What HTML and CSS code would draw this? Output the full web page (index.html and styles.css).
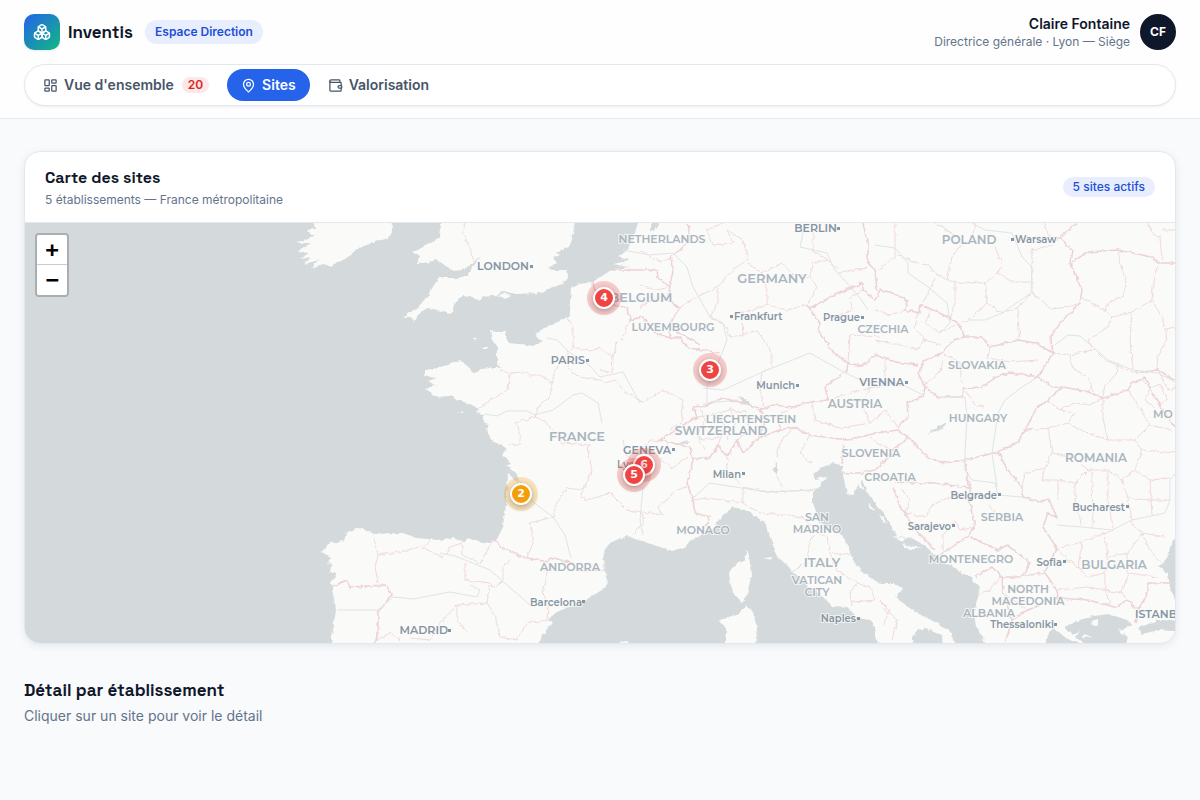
FILE: index.html
```
<!DOCTYPE html>
<html lang="fr">
<head>
    <meta charset="UTF-8">
    <meta name="viewport" content="width=device-width, initial-scale=1.0">
    <title>Inventis - Sites</title>
    <link rel="stylesheet" href="styles.css">
</head>
<body>
    <header class="header">
        <div class="topbar">
            <div class="brand">
                <div class="logo">
                    <svg class="icon" viewBox="0 0 24 24" aria-hidden="true">
                        <path d="M2.97 12.92A2 2 0 0 0 2 14.63v3.24a2 2 0 0 0 .97 1.71l3 1.8a2 2 0 0 0 2.06 0L12 19v-5.5l-5-3-4.03 2.42Z"/>
                        <path d="m7 16.5-4.74-2.85M7 16.5l5-3M7 16.5v5.17"/>
                        <path d="M12 13.5V19l3.97 2.38a2 2 0 0 0 2.06 0l3-1.8a2 2 0 0 0 .97-1.71v-3.24a2 2 0 0 0-.97-1.71L17 10.5l-5 3Z"/>
                        <path d="m17 16.5-5-3M17 16.5l4.74-2.85M17 16.5v5.17"/>
                        <path d="M7.97 4.42A2 2 0 0 0 7 6.13v4.37l5 3 5-3V6.13a2 2 0 0 0-.97-1.71l-3-1.8a2 2 0 0 0-2.06 0l-3 1.8Z"/>
                        <path d="M12 8 7.26 5.15M12 8l4.74-2.85M12 13.5V8"/>
                    </svg>
                </div>
                <span class="brand-name">Inventis</span>
                <span class="space-pill">Espace Direction</span>
            </div>
            <div class="user">
                <div class="user-info">
                    <div class="user-name">Claire Fontaine</div>
                    <div class="user-role">Directrice générale · Lyon — Siège</div>
                </div>
                <div class="avatar">CF</div>
            </div>
        </div>
        <nav class="tabs">
            <button class="tab" type="button">
                <svg class="icon" viewBox="0 0 24 24" aria-hidden="true">
                    <rect x="3" y="3" width="7" height="9" rx="1"/>
                    <rect x="14" y="3" width="7" height="5" rx="1"/>
                    <rect x="14" y="12" width="7" height="9" rx="1"/>
                    <rect x="3" y="16" width="7" height="5" rx="1"/>
                </svg>
                <span>Vue d'ensemble</span>
                <span class="count">20</span>
            </button>
            <button class="tab active" type="button">
                <svg class="icon" viewBox="0 0 24 24" aria-hidden="true">
                    <path d="M20 10c0 5-5.5 10.2-7.4 11.8a1 1 0 0 1-1.2 0C9.5 20.2 4 15 4 10a8 8 0 0 1 16 0"/>
                    <circle cx="12" cy="10" r="3"/>
                </svg>
                <span>Sites</span>
            </button>
            <button class="tab" type="button">
                <svg class="icon" viewBox="0 0 24 24" aria-hidden="true">
                    <path d="M19 7V4a1 1 0 0 0-1-1H5a2 2 0 0 0 0 4h15a1 1 0 0 1 1 1v4h-3a2 2 0 0 0 0 4h3a1 1 0 0 0 1-1v-2a1 1 0 0 0-1-1"/>
                    <path d="M3 5v14a2 2 0 0 0 2 2h15a1 1 0 0 0 1-1v-4"/>
                </svg>
                <span>Valorisation</span>
            </button>
        </nav>
    </header>

    <main class="content">
        <section class="card">
            <div class="card-header">
                <div>
                    <h2 class="card-title">Carte des sites</h2>
                    <p class="card-subtitle">5 établissements — France métropolitaine</p>
                </div>
                <span class="active-pill">5 sites actifs</span>
            </div>
            <div class="map">
                <svg class="basemap" viewBox="25 223 1150 420" role="img" aria-label="Carte de l'Europe">
                    <defs>
                        <filter id="rough" filterUnits="userSpaceOnUse" x="20" y="218" width="1165" height="430" color-interpolation-filters="sRGB">
                            <feTurbulence type="fractalNoise" baseFrequency="0.2" numOctaves="2" seed="4"/>
                            <feDisplacementMap in="SourceGraphic" scale="4" xChannelSelector="R" yChannelSelector="G"/>
                        </filter>
                    </defs>
                    <g filter="url(#rough)">
                        <g class="land">
                            <!-- Ireland -->
                            <path d="M312,215 315,229 306,230 315,236 295,243 311,243 297,252 308,253 301,259 311,257 304,264 319,260 310,268 323,264 330,266 347,258 358,248 378,241 389,238 393,230 392,215Z"/>
                            <!-- Great Britain -->
                            <path d="M442,215 440,237 423,247 413,252 420,256 417,263 428,263 435,259 443,264 453,271 462,270 467,268 474,262 481,256 475,264 466,276 457,278 438,278 436,283 431,287 429,295 417,308 403,317 411,317 415,321 419,314 427,308 438,310 448,314 452,313 455,301 463,296 472,297 479,301 483,297 498,295 503,291 517,294 540,293 550,288 562,284 568,277 567,270 553,270 547,268 557,263 553,258 560,255 556,252 569,247 574,233 575,215Z"/>
                            <path d="M498,296 505,299 511,295 504,293ZM482,347 488,346 488,349 484,349ZM459,411 464,412 462,414ZM473,338 476,338 475,340Z"/>
                            <!-- Continent -->
                            <path d="M640,215 635,233 630,245 625,252 618,257 629,260 613,264 629,267 612,270 600,277 593,282 580,284 571,288 570,303 571,315 562,320 544,328 537,333 536,338 543,341 533,346 520,344 508,343 505,338 506,332 497,332 490,331 492,340 497,347 497,363 501,368 490,368 482,369 473,373 465,363 460,360 453,363 448,365 426,370 424,376 437,378 428,381 436,386 425,388 431,393 436,397 450,396 457,400 470,404 479,409 476,413 484,415 484,422 488,425 486,430 492,440 502,446 507,449 502,454 511,464 506,465 517,475 519,484 515,481 508,472 507,497 503,527 496,541 483,543 470,538 463,542 453,538 437,540 417,538 402,533 373,534 367,530 357,528 346,534 344,541 329,543 322,552 331,557 327,563 333,565 329,573 337,573 331,583 336,610 330,650 534,650 548,628 553,623 547,620 557,612 584,601 605,588 608,583 605,572 603,552 610,543 627,535 632,538 643,541 657,546 672,551 685,547 690,541 703,534 713,528 723,515 733,507 745,510 757,517 767,525 770,537 774,548 779,558 787,565 793,572 810,587 823,597 832,606 847,607 852,612 858,618 870,620 875,627 875,637 883,650 914,650 913,637 918,630 925,628 942,635 943,650 957,650 952,633 937,623 915,612 895,597 903,588 895,584 880,584 863,573 853,560 847,543 840,532 820,523 813,503 813,490 818,488 827,477 815,479 813,473 833,463 842,466 843,475 847,494 853,495 857,487 862,480 867,492 874,502 882,511 890,523 897,536 912,538 925,546 938,558 955,568 972,579 980,588 977,600 974,613 976,627 990,650 1190,650 1190,215Z"/>
                            <!-- Mediterranean islands -->
                            <path d="M748,551 750,563 751,577 747,594 743,602 735,596 731,587 729,573 732,567 745,560 746,552ZM746,606 753,612 757,628 755,650 726,650 726,627 719,620 733,617ZM764,558 772,557 771,560ZM620,642 628,641 628,648 620,648Z"/>
                            <path d="M859,478 864,490 859,487ZM868,502 876,511 871,509ZM879,514 888,523 882,521ZM892,536 906,538 902,542ZM902,544 922,548 908,550Z"/>
                        </g>
                        <g class="water">
                            <path d="M648,215 664,215 656,228 650,233 652,224Z"/>
                            <path d="M1046,650 1048,633 1054,628 1066,638 1073,636 1065,626 1073,623 1088,617 1108,614 1128,620 1133,626 1118,630 1128,637 1122,650Z"/>
                            <path d="M1138,628 1158,620 1190,621 1190,632 1158,630 1142,634Z"/>
                            <path d="M1190,532 1173,540 1170,547 1168,557 1158,567 1168,573 1170,587 1175,600 1190,602Z"/>
                            <path d="M675,445 682,441 691,442 683,444ZM737,397 748,400 754,408 747,406ZM927,434 936,428 947,422 943,429ZM777,461 777,474 773,471Z"/>
                        </g>
                        <g class="land">
                            <path d="M1091,621 1098,619 1098,626 1092,626ZM1083,634 1091,638 1082,637Z"/>
                            <path d="M1066,638 1080,631 1075,637 1086,645 1074,642Z"/>
                        </g>
                        <g class="region">
                            <path d="M465,223 462,232 467,242 472,252 473,262M567,318 573,327 573,347 590,351 600,348 613,357 617,343 623,337 630,320M500,370 510,373 523,372 530,375 540,375 552,383 555,370 568,353 573,347M510,373 508,390 490,400 480,407M552,383 550,397 538,407 535,417 515,423 520,432 520,445 508,445M535,417 543,420 552,430 562,443 590,445M568,353 568,367 578,377 600,380 605,383 615,380 623,390 643,402 663,390 683,400 682,407 683,420 670,430M613,357 612,373 600,370"/>
                            <path d="M580,497 587,500 610,493 627,510 643,512 662,515 658,507 677,490 687,487M580,497 592,470 587,447 590,445M643,512 643,523 633,535M590,475 583,490 567,488 557,503 553,517 530,523 533,543 527,557M640,450 650,440 662,441M660,458 672,468 688,457"/>
                            <path d="M373,535 378,555 400,552 427,545 430,540M378,555 375,567 378,583M423,548 443,557 450,547 462,543 462,555 480,563 493,541M465,563 465,580 490,583 493,587 503,582 503,567 510,558M550,563 543,593 548,607 547,620M490,585 487,603 497,620 500,637 517,640 527,623 547,620M487,603 457,605 457,620 467,633M457,605 440,623 430,640 410,638M375,641 390,633 400,640"/>
                            <path d="M723,223 707,230 712,245 733,243 727,230 743,240 748,260 732,270 718,287 707,292 687,302 680,308M718,287 718,303 710,317 727,327 730,338 743,335 742,320 740,313 753,310 767,305 767,290 762,273 748,263M762,273 782,263 793,275 810,277 812,263 828,260 813,250 813,233 822,223M767,305 787,310 807,305 817,287 810,277M743,335 757,330 772,353 772,367 762,373 760,387 763,407M828,260 840,272 868,268M863,290 850,298 853,310 832,318M848,363 850,335 880,337M670,287 657,290 640,285M640,308 650,300 667,300M640,250 660,262 673,258"/>
                            <path d="M895,223 895,257 875,272M897,255 918,263 928,265 935,273 947,280 952,257 962,243 952,233 935,223M975,223 972,240M995,247 1002,263 998,273 985,283 955,282 947,280M998,273 1012,282 1030,282M985,283 987,303 972,317 962,323M955,282 955,303 950,320M987,303 1002,313 1017,308 1032,293 1045,303 1050,309 1068,307 1080,303M1017,308 1020,340M935,278 923,303M1032,293 1032,250 1052,245 1060,238M920,305 915,327 925,340 942,345M875,310 890,315 905,310M875,340 900,345 918,350 925,340M930,313 925,323 940,333 955,325"/>
                            <path d="M1045,223 1048,235 1060,238M1148,223 1152,233 1160,237 1162,260M1162,230 1175,230M1118,252 1122,270 1127,283 1122,297 1108,303 1105,310 1082,298M1158,263 1153,287 1152,300 1132,312 1112,317 1105,310M1132,312 1130,340 1133,370M1112,317 1108,327 1088,340 1092,347 1105,360 1135,373M1152,300 1163,320 1167,340 1158,357 1157,370M1166,329 1175,327M1053,353 1070,355 1092,350M1070,355 1072,367 1090,380 1093,392M1103,398 1105,385 1116,375 1118,362M990,347 988,358 1010,362 1038,360M942,353 960,362 962,385M965,390 975,405 985,407M925,385 940,372 942,360"/>
                            <path d="M1048,400 1060,410 1075,403 1090,405 1103,398M1048,428 1068,423 1075,413 1060,410M1025,430 1048,428 1052,453 1045,468 1025,473 1022,487M1068,423 1085,432 1108,440 1103,418 1103,398M1108,440 1135,440 1142,450 1175,453M1135,440 1150,425 1140,408 1128,390M1150,425 1172,430M1052,453 1075,457 1088,470 1108,470 1122,480 1135,470 1142,450M1045,468 1042,480 1058,480 1058,500M1058,480 1075,483 1075,500 1082,525M1088,470 1075,483M1092,470 1093,527M1108,470 1108,500 1113,528M1122,480 1128,498 1132,520M1135,470 1150,480 1170,478M1128,498 1150,500 1170,500M1150,480 1152,515M1140,378 1150,388 1160,384 1168,400 1158,405M1150,388 1145,400 1155,408M1160,375 1168,390 1175,388"/>
                            <path d="M1058,548 1082,542 1100,535 1113,530M1082,542 1078,567 1088,577 1105,573 1108,557 1104,533M1108,557 1128,553 1142,533 1165,537M1105,573 1105,590 1122,593 1128,573 1128,553M1128,573 1158,577M1128,520 1142,533 1150,550 1160,562M1057,590 1088,587 1105,590 1110,604M1122,593 1128,600M1057,548 1068,560 1078,567M900,487 910,500 905,513 925,517 932,505 950,497 970,500M975,527 960,530 955,522 943,535 943,553M990,505 1000,520M870,437 880,445 893,450"/>
                            <path d="M693,500 707,498 743,503 743,487 727,470 728,457M743,487 767,492 813,490M743,503 760,513 787,515 802,517 817,533 810,540 807,560 793,572M817,533 827,537 830,553 850,555M830,553 837,570 857,583 850,593 852,606M857,583 870,587 875,600 852,602M777,457 780,443 793,427M777,475 782,488M810,435 800,453 813,465M883,625 890,610 880,600M883,608 897,620 892,640"/>
                            <path d="M700,407 705,420 697,435 705,450M712,415 725,425 718,445M730,407 735,425 727,440M745,412 750,430 737,440M697,417 712,415 730,410 745,412M690,430 703,440 720,437M780,430 778,415 793,407M812,402 815,420 840,428 870,423 885,410 898,427M870,423 862,405 870,388 885,385 885,360M828,400 855,392 870,388M1000,577 990,590 978,595M1003,593 1028,610"/>
                        </g>
                        <g class="border">
                            <path d="M593,282 595,293 613,305 628,308 630,320 643,317 655,333 670,338 680,338 688,348 703,350 720,353M612,270 633,270 657,270 658,278 670,287 667,300 680,308 670,323 670,338M672,328 683,335 700,345M688,223 690,240 680,250 670,257 673,270 670,287"/>
                            <path d="M810,308 830,297 863,283 863,290 875,300 880,290 890,292 907,300 905,310 920,313 920,305 938,312 958,323 965,337 982,337 990,347 1018,340 1035,343 1053,353M863,223 868,245 868,263 875,270 877,291M807,305 820,323 818,330 833,352 848,363 847,370 825,387 828,400 810,402 793,407 773,405 760,410 740,402 723,398 707,405M848,363 862,366 875,355 895,362 918,365M965,337 953,340 942,353 925,360 918,373 925,387 938,397 962,397 963,388 982,387 995,378 1008,373 1028,375 1038,377 1053,353 1050,337 1063,320 1080,303 1082,290 1070,263 1072,250 1060,238 1077,223"/>
                            <path d="M1072,262 1088,252 1118,250 1152,257 1158,263 1175,263M1038,377 1052,387 1063,387 1088,392 1103,398 1128,390 1132,383 1145,378 1155,397 1165,413 1175,427M1135,373 1158,370 1175,380M1063,387 1048,400 1037,407 1025,430 1018,442 998,452 965,460 942,463 928,457 908,437 898,430 898,427 908,417 907,403 923,397 925,387M908,438 895,448 883,463 875,470 860,473 843,473M998,452 1008,470 1022,487 1022,497 1042,502 1048,498 1057,517 1048,513 1043,527 1057,548 1045,572"/>
                            <path d="M895,482 915,483 935,483 970,488 970,503 975,527 967,537 955,545 940,555M893,487 900,507 918,533 935,550M965,462 967,477 970,488M970,537 998,550 1008,545 1030,563 1022,577 1002,577 992,567 975,577M1022,576 1045,573 1057,590 1058,598 1028,610 1012,620 1005,643M1002,577 1003,593 1012,620M1058,598 1088,600 1115,607 1128,600 1138,610 1148,593 1148,583 1172,583M1138,610 1135,623"/>
                            <path d="M707,405 693,407 697,417 680,427 660,440 673,443 690,447 693,460 687,483 693,500 695,513 710,517 703,530M693,458 710,458 718,445 727,457 737,440 743,453 760,437 780,430 793,427 810,435 847,440 877,433 898,430M843,445 842,463M760,410 765,420 760,437M493,540 503,548 523,557 548,562 550,557 573,563 580,571 605,570M332,587 347,580 350,587 385,585 392,595 378,612 378,633 375,643"/>
                        </g>
                    </g>
                    <g class="river">
                        <path d="M485,414 497,416 507,411 527,411 535,415 553,410 573,395 582,393 598,403 602,423M547,338 557,340 570,353 587,363 600,377 623,372 640,403M623,440 626,455 638,465M643,487 640,520 643,535M517,477 533,502 553,517 565,535 571,558M440,553 455,556 490,570 530,605M337,610 378,610 393,597 413,599 450,592 477,597 480,590 470,585"/>
                        <path d="M623,250 650,255 673,253 687,267 693,287 710,317 723,323 727,340 718,363 707,387 707,403 738,400M703,388 723,390 767,370 780,365 810,353 840,370 860,380 905,386 923,395M805,223 800,247 827,253 835,270 847,283 860,298 868,310M693,498 710,483 735,487 767,492 813,490"/>
                        <path d="M972,223 985,230 1012,233 1022,257 1032,267 1031,293 1002,313 985,320 968,320M875,245 895,248 908,263 908,273 928,287 947,303 950,323 940,333M938,397 965,397 967,417 965,453 965,470 972,480 995,483 998,495 1022,497 1042,502M1038,377 1022,387 1005,400 998,413 992,453 997,487M1055,345 1068,335 1080,336 1088,343 1108,360 1133,370 1158,373 1175,382M1057,525 1082,527 1112,530 1132,520 1165,513 1170,500 1170,480 1175,474"/>
                    </g>
                    <g class="country">
                        <text x="662" y="243">NETHERLANDS</text>
                        <text x="673" y="331">LUXEMBOURG</text>
                        <text x="883" y="333">CZECHIA</text>
                        <text x="977" y="369">SLOVAKIA</text>
                        <text x="978" y="422">HUNGARY</text>
                        <text x="751" y="423">LIECHTENSTEIN</text>
                        <text x="871" y="457">SLOVENIA</text>
                        <text x="890" y="481">CROATIA</text>
                        <text x="1002" y="521">SERBIA</text>
                        <text x="971" y="563">MONTENEGRO</text>
                        <text x="1028" y="593">NORTH</text>
                        <text x="1028" y="605">MACEDONIA</text>
                        <text x="989" y="617">ALBANIA</text>
                        <text x="703" y="534">MONACO</text>
                        <text x="817" y="521">SAN</text>
                        <text x="817" y="533">MARINO</text>
                        <text x="817" y="584">VATICAN</text>
                        <text x="817" y="596">CITY</text>
                        <text x="570" y="571">ANDORRA</text>
                        <text x="1163" y="418">MO</text>
                    </g>
                    <g class="country medium">
                        <text x="969" y="244">POLAND</text>
                        <text x="855" y="408">AUSTRIA</text>
                        <text x="721" y="435">SWITZERLAND</text>
                        <text x="1096" y="462">ROMANIA</text>
                        <text x="1114" y="569">BULGARIA</text>
                    </g>
                    <g class="country large">
                        <text x="641" y="302">BELGIUM</text>
                        <text x="772" y="283">GERMANY</text>
                        <text x="577" y="441">FRANCE</text>
                        <text x="822" y="567">ITALY</text>
                    </g>
                    <g class="city capital">
                        <text x="529" y="270">LONDON</text>
                        <text x="585" y="364">PARIS</text>
                        <text x="448" y="634">MADRID</text>
                        <text x="837" y="232">BERLIN</text>
                        <text x="904" y="386">VIENNA</text>
                        <text x="671" y="454">GENEVA</text>
                        <text class="start" x="1135" y="618">ISTANB</text>
                    </g>
                    <g class="city">
                        <text class="start" x="734" y="320">Frankfurt</text>
                        <text class="start" x="1015" y="243">Warsaw</text>
                        <text class="start" x="617" y="468">Lyon</text>
                        <text x="860" y="321">Prague</text>
                        <text x="795" y="389">Munich</text>
                        <text x="741" y="478">Milan</text>
                        <text x="997" y="499">Belgrade</text>
                        <text x="951" y="530">Sarajevo</text>
                        <text x="1125" y="511">Bucharest</text>
                        <text x="1062" y="566">Sofia</text>
                        <text x="1054" y="628">Thessaloniki</text>
                        <text x="856" y="622">Naples</text>
                        <text x="582" y="606">Barcelona</text>
                    </g>
                    <path class="dots" d="M530,265h3v3h-3zM586,359h3v3h-3zM448,629h3v3h-3zM837,227h3v3h-3zM905,381h3v3h-3zM672,448h3v3h-3zM730,315h3v3h-3zM1011,238h3v3h-3zM861,316h3v3h-3zM796,384h3v3h-3zM742,472h3v3h-3zM998,493h3v3h-3zM952,524h3v3h-3zM1126,505h3v3h-3zM1063,560h3v3h-3zM1054,623h3v3h-3zM857,617h3v3h-3zM582,600h3v3h-3z"/>
                </svg>

                <button class="marker" type="button" style="left: 50.35%; top: 17.86%" aria-label="Site du Nord, 4 alertes"><span>4</span></button>
                <button class="marker" type="button" style="left: 59.57%; top: 35%" aria-label="Site de l'Est, 3 alertes"><span>3</span></button>
                <button class="marker" type="button" style="left: 53.83%; top: 57.62%" aria-label="Lyon, 6 alertes"><span>6</span></button>
                <button class="marker" type="button" style="left: 52.96%; top: 60%" aria-label="Lyon, 5 alertes"><span>5</span></button>
                <button class="marker warning" type="button" style="left: 43.13%; top: 64.52%" aria-label="Bordeaux, 2 alertes"><span>2</span></button>

                <div class="zoom-control">
                    <button type="button" aria-label="Zoom avant">+</button>
                    <button type="button" aria-label="Zoom arrière">−</button>
                </div>
            </div>
        </section>

        <section class="details">
            <h2>Détail par établissement</h2>
            <p>Cliquer sur un site pour voir le détail</p>
        </section>
    </main>
</body>
</html>
```
FILE: styles.css
```
* {
    box-sizing: border-box;
}
body {
    margin: 0;
    background-color: #f8fafc;
    color: #0f172a;
    font-family: Inter, "Liberation Sans", sans-serif;
    font-size: 14px;
    line-height: 20px;
}
h2, p {
    margin: 0;
}
button {
    font-family: inherit;
    cursor: pointer;
}
.icon {
    width: 15px;
    height: 15px;
    flex-shrink: 0;
    fill: none;
    stroke: currentColor;
    stroke-width: 2;
    stroke-linecap: round;
    stroke-linejoin: round;
}

/* Header */
.header {
    background-color: #fefefe;
    border-bottom: 1px solid #e2e8f0;
    padding: 14px 24px 12px;
}
.topbar {
    display: flex;
    justify-content: space-between;
    align-items: center;
    margin-bottom: 14px;
}
.brand, .user {
    display: flex;
    align-items: center;
}
.logo {
    display: flex;
    align-items: center;
    justify-content: center;
    width: 36px;
    height: 36px;
    margin-right: 8px;
    border-radius: 10px;
    background: linear-gradient(135deg, #2563eb, #10b981);
    box-shadow: 0 1px 2px rgba(15, 23, 42, 0.08);
    color: #fff;
}
.logo .icon {
    width: 18px;
    height: 18px;
}
.brand-name {
    margin-right: 12px;
    font-family: "Space Grotesk", Inter, sans-serif;
    font-size: 17px;
    font-weight: 600;
}
.space-pill, .active-pill {
    padding: 2px 10px;
    border-radius: 12px;
    background-color: #e8eefd;
    color: #1d4ed8;
    font-size: 12px;
    font-weight: 600;
}
.active-pill {
    padding: 0 10px;
    font-weight: 500;
}
.user {
    gap: 10px;
}
.user-info {
    text-align: right;
}
.user-name {
    font-weight: 600;
}
.user-role {
    color: #64748b;
    font-size: 12px;
    line-height: 16px;
}
.avatar {
    width: 36px;
    height: 36px;
    border-radius: 50%;
    background-color: #0f172a;
    color: #fff;
    font-size: 12px;
    font-weight: 700;
    line-height: 36px;
    text-align: center;
}
.tabs {
    display: flex;
    gap: 4px;
    padding: 4px;
    border: 1px solid #e2e8f0;
    border-radius: 21px;
    background-color: #fff;
    box-shadow: 0 1px 2px rgba(15, 23, 42, 0.08);
}
.tab {
    display: flex;
    align-items: center;
    gap: 6px;
    height: 32px;
    padding: 0 14px;
    border: 0;
    border-radius: 16px;
    background: none;
    color: #475569;
    font-size: 14px;
    font-weight: 600;
    line-height: 20px;
}
.tab.active {
    background-color: #2563eb;
    color: #fff;
}
.count {
    margin-left: 2px;
    padding: 0 6px;
    border-radius: 8px;
    background-color: #fee7e7;
    color: #dc2626;
    font-size: 12px;
    line-height: 16px;
}

/* Map card */
.content {
    padding: 32px 24px;
}
.card {
    overflow: hidden;
    border: 1px solid #e2e8f0;
    border-radius: 16px;
    background-color: #fff;
    box-shadow: 0 2px 8px rgba(15, 23, 42, 0.08);
}
.card-header {
    display: flex;
    justify-content: space-between;
    align-items: center;
    padding: 14px 20px;
    border-bottom: 1px solid #e2e8f0;
}
.card-title {
    font-family: "Space Grotesk", Inter, sans-serif;
    font-size: 16px;
    font-weight: 600;
    line-height: 24px;
}
.card-subtitle {
    margin-top: 2px;
    color: #64748b;
    font-size: 12px;
    line-height: 16px;
}
.map {
    position: relative;
    aspect-ratio: 1150 / 420;
    background-color: #d4dadc;
    overflow: hidden;
}
.basemap {
    display: block;
    width: 100%;
    height: 100%;
    font-family: Montserrat, Inter, sans-serif;
}
.land {
    fill: #fafaf8;
}
.water {
    fill: #d4dadc;
}
.region, .border, .river {
    fill: none;
    stroke-linejoin: round;
}
.region {
    stroke: #f0dadd;
}
.border {
    stroke: #edd2d6;
    stroke-width: 1.5;
}
.river {
    stroke: #dfe4e7;
}
.country, .city {
    paint-order: stroke;
    stroke: rgba(250, 250, 248, 0.8);
    stroke-width: 2;
    font-weight: 600;
}
.country {
    fill: #a9b5be;
    font-size: 11px;
    text-anchor: middle;
}
.country.medium {
    font-size: 12px;
}
.country.large {
    font-size: 13px;
}
.city {
    fill: #8695a4;
    font-size: 10px;
    text-anchor: end;
}
.city.capital {
    font-size: 11px;
}
.city .start {
    text-anchor: start;
}
.dots {
    fill: #8695a4;
}
.marker {
    position: absolute;
    width: 34px;
    height: 34px;
    padding: 6px;
    border: 0;
    border-radius: 50%;
    background-color: rgba(239, 68, 68, 0.25);
    transform: translate(-50%, -50%);
}
.marker span {
    display: block;
    width: 22px;
    height: 22px;
    border: 2px solid #fff;
    border-radius: 50%;
    background-color: #ef4444;
    box-shadow: 0 2px 6px rgba(0, 0, 0, 0.3);
    color: #fff;
    font-family: "DejaVu Sans", sans-serif;
    font-size: 11px;
    font-weight: 700;
    line-height: 17px;
    text-align: center;
}
.marker.warning {
    background-color: rgba(245, 158, 11, 0.25);
}
.marker.warning span {
    background-color: #f59e0b;
}
.zoom-control {
    position: absolute;
    top: 10px;
    left: 10px;
    border: 2px solid rgba(0, 0, 0, 0.2);
    border-radius: 4px;
    background-clip: padding-box;
}
.zoom-control button {
    display: block;
    width: 30px;
    height: 30px;
    padding: 0;
    border: 0;
    background-color: #fff;
    color: #000;
    font-family: "DejaVu Sans Mono", monospace;
    font-size: 22px;
    font-weight: 700;
    line-height: 30px;
}
.zoom-control button:first-child {
    border-bottom: 1px solid #ccc;
    border-radius: 2px 2px 0 0;
}
.zoom-control button:last-child {
    border-radius: 0 0 2px 2px;
}

/* Site details */
.details {
    margin-top: 32px;
}
.details h2 {
    font-family: "Space Grotesk", Inter, sans-serif;
    font-size: 17px;
    font-weight: 600;
    line-height: 28px;
}
.details p {
    margin-top: 2px;
    color: #64748b;
}
```
